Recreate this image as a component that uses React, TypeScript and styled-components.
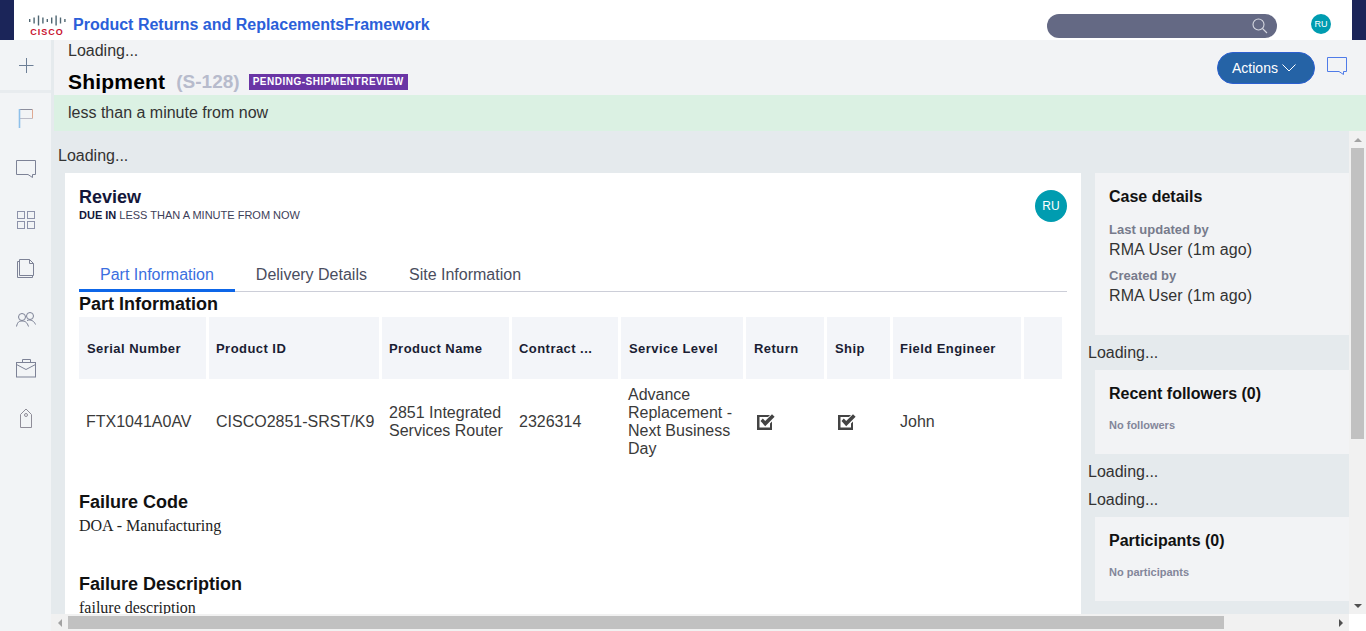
import React from 'react';
import styled, { createGlobalStyle } from 'styled-components';

const GlobalStyle = createGlobalStyle`
  html, body {
    margin: 0;
    padding: 0;
    height: 631px;
    overflow: hidden;
    background: #fff;
    font-family: "Liberation Sans", Arial, sans-serif;
    font-size: 16px;
    color: #222;
  }
  * { box-sizing: border-box; }
`;

const Page = styled.div`
  width: 1366px;
  height: 631px;
  display: flex;
  flex-direction: column;
  overflow: hidden;
`;

/* top bar */
const TopBar = styled.header`
  height: 40px;
  flex: none;
  display: flex;
  align-items: center;
  background: #fff;
  border-left: 14px solid #1b2559;
  border-right: 14px solid #1b2559;
  padding: 0 21px 0 14px;
`;

const Logo = styled.div`
  width: 38px;
  height: 24px;
  margin-top: 14px;
  display: flex;
  flex-direction: column;
  align-items: center;
`;

const LogoWord = styled.span`
  font-size: 9px;
  line-height: 9px;
  font-weight: 700;
  letter-spacing: 1px;
  color: #c8102e;
  margin-top: 2px;
`;

const AppTitle = styled.h1`
  margin: 10px 0 0 7px;
  font-size: 16px;
  line-height: 18px;
  font-weight: 700;
  color: #2b5fd9;
  flex: 1;
`;

const SearchBox = styled.div`
  width: 230px;
  height: 24px;
  margin-top: 12px;
  border-radius: 12px;
  background: #646984;
  display: flex;
  align-items: center;
  justify-content: flex-end;
  padding-right: 9px;
`;

const Avatar = styled.div<{ $size: number; $font: number }>`
  width: ${p => p.$size}px;
  height: ${p => p.$size}px;
  flex: none;
  border-radius: 50%;
  background: #009cb0;
  color: #fff;
  font-size: ${p => p.$font}px;
  display: flex;
  align-items: center;
  justify-content: center;
`;

const TopAvatar = styled(Avatar)`
  margin: 8px 0 0 34px;
`;

/* body */
const Body = styled.div`
  flex: 1;
  display: flex;
  min-height: 0;
`;

const SideNav = styled.nav`
  width: 51px;
  flex: none;
  background: #f2f4f6;
  display: flex;
  flex-direction: column;
`;

const NavCell = styled.div<{ $first?: boolean; $nudge?: number }>`
  height: 50px;
  flex: none;
  display: flex;
  align-items: center;
  justify-content: center;
  padding-top: ${p => p.$nudge ?? 0}px;
  ${p => p.$first && 'height: 53px; border-bottom: 3px solid #e8ecef;'}
`;

const MainColumn = styled.div`
  flex: 1;
  min-width: 0;
  display: flex;
  flex-direction: column;
  background: #e5eaed;
`;

const CasePanel = styled.div`
  height: 55px;
  flex: none;
  margin-left: 3px;
  background: #f2f3f5;
  padding: 2px 19px 0 14px;
  display: flex;
  justify-content: space-between;
`;

const LoadingText = styled.div`
  font-size: 16px;
  line-height: 18px;
  color: #333;
`;

const CaseTitleRow = styled.div`
  display: flex;
  align-items: center;
  margin-top: 10px;
  height: 24px;
`;

const CaseName = styled.span`
  font-size: 21px;
  font-weight: 700;
  letter-spacing: 0.2px;
  color: #000;
`;

const CaseId = styled.span`
  font-size: 19px;
  font-weight: 700;
  color: #b7bbcc;
  margin-left: 11px;
`;

const StatusBadge = styled.span`
  margin-left: 9px;
  height: 16px;
  padding: 0 4px;
  background: #6a35a5;
  color: #fff;
  font-size: 10px;
  line-height: 16px;
  font-weight: 700;
  letter-spacing: 0.5px;
`;

const CaseActions = styled.div`
  display: flex;
  align-items: flex-start;
  gap: 12px;
  padding-top: 10px;
`;

const ActionsButton = styled.button`
  width: 98px;
  height: 32px;
  border: 1px solid #2b5fd0;
  border-radius: 16px;
  background: #2563a6;
  color: #fff;
  font: 14px "Liberation Sans", Arial, sans-serif;
  display: flex;
  align-items: center;
  justify-content: center;
  gap: 4px;
  padding: 0 4px 0 0;
`;

const ChatButton = styled.div`
  padding-top: 3px;
  line-height: 0;
`;

const DueBanner = styled.div`
  height: 36px;
  flex: none;
  margin-left: 3px;
  background: #dbf1e3;
  padding-left: 14px;
  font-size: 16px;
  line-height: 36px;
  color: #333;
`;

/* scroll frame */
const ScrollFrame = styled.div`
  flex: 1;
  min-height: 0;
  display: grid;
  grid-template-columns: 1298px 17px;
  grid-template-rows: 483px 17px;
`;

const Viewport = styled.div`
  overflow: hidden;
  padding-left: 7px;
`;

const ViewportLoading = styled(LoadingText)`
  padding-top: 16px;
  height: 42px;
`;

const Columns = styled.div`
  display: flex;
  width: 1400px;
`;

const Card = styled.section`
  width: 1016px;
  flex: none;
  margin-left: 7px;
  background: #fff;
  padding: 14px 14px 30px;
`;

const CardHead = styled.div`
  display: flex;
  justify-content: space-between;
  align-items: flex-start;
  height: 75px;
`;

const CardTitle = styled.h2`
  margin: 0;
  font-size: 18px;
  line-height: 20px;
  font-weight: 700;
  color: #14173a;
`;

const DueLine = styled.div`
  display: flex;
  font-size: 11px;
  line-height: 13px;
  color: #3d4058;
  margin-top: 2px;
`;

const DueLabel = styled.strong`
  color: #14173a;
  margin-right: 3px;
`;

const CardAvatar = styled(Avatar)`
  margin-top: 3px;
`;

const TabList = styled.div`
  display: flex;
  height: 30px;
  border-bottom: 1px solid #ccced8;
`;

const Tab = styled.div<{ $active?: boolean }>`
  height: 30px;
  padding: 0 21px;
  font-size: 16px;
  line-height: 26px;
  color: ${p => (p.$active ? '#3b6fe0' : '#4a4d5e')};
  ${p => p.$active && 'border-bottom: 3px solid #0d66e8;'}
`;

const SectionTitle = styled.h3`
  margin: 0;
  font-size: 18px;
  line-height: 25px;
  font-weight: 700;
  color: #111;
`;

const SectionText = styled.p`
  margin: 2px 0 0;
  font-family: "Liberation Serif", "Times New Roman", serif;
  font-size: 16px;
  line-height: 18px;
  color: #222;
`;

const FailureBlock = styled.div<{ $gap: number }>`
  margin-top: ${p => p.$gap}px;
`;

const PartsTable = styled.div`
  display: grid;
  grid-template-columns: 127px 170px 127px 106px 122px 78px 63px 128px 38px;
  column-gap: 3px;
  width: 983px;
`;

const HeadCell = styled.div<{ $inset: number }>`
  height: 62px;
  background: #f3f5f9;
  padding-left: ${p => p.$inset}px;
  font-size: 13px;
  font-weight: 700;
  letter-spacing: 0.45px;
  color: #1a1d33;
  display: flex;
  align-items: center;
  white-space: nowrap;
`;

const BodyCell = styled.div<{ $inset?: number }>`
  height: 86px;
  padding-left: ${p => p.$inset ?? 7}px;
  font-size: 16px;
  line-height: 18px;
  color: #3a3a3a;
  display: flex;
  align-items: center;
`;

const SideColumn = styled.aside`
  width: 270px;
  flex: none;
  margin-left: 7px;
`;

const SidePanel = styled.div<{ $height: number }>`
  height: ${p => p.$height}px;
  margin-left: 7px;
  background: #f2f3f5;
  padding: 15px 14px;
`;

const SideTitle = styled.h4`
  margin: 0;
  font-size: 16px;
  line-height: 18px;
  font-weight: 700;
  color: #111;
`;

const SideDetails = styled.div`
  margin-top: 17px;
`;

const SideLabel = styled.div`
  margin-top: 9px;
  font-size: 13px;
  line-height: 14px;
  font-weight: 700;
  color: #777b8c;

  &:first-child {
    margin-top: 0;
  }
`;

const SideValue = styled.div`
  margin-top: 3px;
  font-size: 16px;
  line-height: 20px;
  letter-spacing: 0.1px;
  color: #333;
`;

const SideEmpty = styled.div`
  margin-top: 16px;
  font-size: 11px;
  line-height: 12px;
  font-weight: 700;
  color: #83869a;
`;

const SideLoading = styled(LoadingText)<{ $height: number; $top: number }>`
  height: ${p => p.$height}px;
  padding-top: ${p => p.$top}px;
`;

const VerticalBar = styled.div`
  background: #f1f1f1;
  display: flex;
  flex-direction: column;
  align-items: center;
  justify-content: space-between;
`;

const VerticalThumb = styled.div`
  width: 13px;
  height: 291px;
  margin-left: 2px;
  background: #c1c1c1;
`;

const HorizontalBar = styled.div`
  background: #f1f1f1;
  display: flex;
  align-items: center;
`;

const HorizontalThumb = styled.div`
  width: 1156px;
  height: 13px;
  background: #c1c1c1;
  margin-right: auto;
`;

const ArrowSlot = styled.div`
  height: 17px;
  width: 17px;
  display: flex;
  align-items: center;
  justify-content: center;
  line-height: 0;
`;

const Corner = styled.div`
  background: #fff;
`;

const navStroke = '#7d8296';

function Icon({ w, h, children, stroke = navStroke }: { w: number; h: number; children: React.ReactNode; stroke?: string }) {
  return (
    <svg width={w} height={h} viewBox={`0 0 ${w} ${h}`} fill="none" stroke={stroke} strokeWidth="1">
      {children}
    </svg>
  );
}

function ChatIcon({ stroke }: { stroke?: string }) {
  return (
    <Icon w={20} h={20} stroke={stroke}>
      <path d="M.5 2.5H19.5V16.5H16.5V19.5L12 16.5H.5Z" />
    </Icon>
  );
}

function Triangle({ dir, muted }: { dir: 'up' | 'down' | 'left' | 'right'; muted?: boolean }) {
  const points = { up: '0,6 4,2 8,6', down: '0,2 8,2 4,6', left: '6,0 6,8 2,4', right: '2,0 2,8 6,4' }[dir];
  return (
    <svg width="8" height="8" viewBox="0 0 8 8">
      <polygon points={points} fill={muted ? '#a3a3a3' : '#505050'} />
    </svg>
  );
}

function CiscoLogo() {
  const bars = [3, 6, 10, 6, 3, 6, 10, 6, 3];
  return (
    <Logo>
      <svg width="38" height="11" viewBox="0 0 38 11">
        {bars.map((b, i) => (
          <rect key={i} x={1 + i * 4.4} y={(11 - b) / 2} width="1.4" height={b} fill="#4f6672" />
        ))}
      </svg>
      <LogoWord>CISCO</LogoWord>
    </Logo>
  );
}

const columns: [string, number][] = [
  ['Serial Number', 8],
  ['Product ID', 7],
  ['Product Name', 7],
  ['Contract ...', 7],
  ['Service Level', 8],
  ['Return', 8],
  ['Ship', 8],
  ['Field Engineer', 7],
  ['', 7],
];

function CheckedBox() {
  return (
    <svg width="18" height="16" viewBox="0 0 18 16">
      <path d="M0 1H13L11 3H2.5V13.5H13V9.5L15 7.5V16H0Z" fill="#444" />
      <path d="M3.5 7L5.8 4.6L8.2 7L15 .2L17.6 2.8L8.2 12.2Z" fill="#444" />
    </svg>
  );
}

export default function App() {
  return (
    <Page>
      <GlobalStyle />
      <TopBar>
        <CiscoLogo />
        <AppTitle>Product Returns and ReplacementsFramework</AppTitle>
        <SearchBox>
          <svg width="16" height="16" viewBox="0 0 16 16" fill="none" stroke="#d5d7e0" strokeWidth="1.1">
            <circle cx="6.5" cy="6.5" r="5.5" />
            <path d="M10.5 10.5L15 15" />
          </svg>
        </SearchBox>
        <TopAvatar $size={20} $font={9}>RU</TopAvatar>
      </TopBar>

      <Body>
        <SideNav>
          <NavCell $first>
            <Icon w={16} h={16} stroke="#6d7f96">
              <path d="M8.5 1V16M1 8.5H15.5" />
            </Icon>
          </NavCell>
          <NavCell>
            <Icon w={16} h={20} stroke="#8d8f9e">
              <path d="M1.5 1.5H14.5" />
              <path d="M14.5 1.5V10.5" stroke="#dfa992" />
              <path d="M1.5 10.5H14.5" stroke="#bcbdc8" />
              <path d="M1.5 1V20" stroke="#8ec0ea" strokeWidth="1.6" />
            </Icon>
          </NavCell>
          <NavCell>
            <ChatIcon />
          </NavCell>
          <NavCell $nudge={4}>
            <Icon w={18} h={18} stroke="#8d92aa">
              <rect x=".5" y=".5" width="7" height="7" />
              <rect x="10.5" y=".5" width="7" height="7" />
              <rect x=".5" y="10.5" width="7" height="7" />
              <rect x="10.5" y="10.5" width="7" height="7" />
            </Icon>
          </NavCell>
          <NavCell>
            <Icon w={18} h={20}>
              <path d="M2.5 1.5H12.5L16.5 5.5V17.5H2.5Z" />
              <path d="M12.5 1.5V5.5H16.5" />
              <path d="M2.5 3.5H.5V19.5H15.5V17.5" />
            </Icon>
          </NavCell>
          <NavCell $nudge={2}>
            <Icon w={20} h={15}>
              <circle cx="6" cy="5" r="3.5" />
              <circle cx="14" cy="4" r="3.5" />
              <path d="M.5 14.5C1.5 10 3 9 6 9S11 10 12.5 14.5" />
              <path d="M11 8.5C15 7 18 9 19.5 12.5" />
            </Icon>
          </NavCell>
          <NavCell>
            <Icon w={20} h={19}>
              <rect x=".5" y="3.5" width="19" height="14.5" />
              <path d="M6.5 3.5V.5H14.5V3.5" />
              <path d="M.5 5.5L10 10.5L19.5 5.5" />
            </Icon>
          </NavCell>
          <NavCell>
            <Icon w={12} h={20} stroke="#8f8d98">
              <path d="M.5 6.5L6 1L11.5 6.5V19.5H.5Z" />
              <circle cx="6" cy="7" r="1.5" />
            </Icon>
          </NavCell>
        </SideNav>

        <MainColumn>
          <CasePanel>
            <div>
              <LoadingText>Loading...</LoadingText>
              <CaseTitleRow>
                <CaseName>Shipment</CaseName>
                <CaseId>(S-128)</CaseId>
                <StatusBadge>PENDING-SHIPMENTREVIEW</StatusBadge>
              </CaseTitleRow>
            </div>
            <CaseActions>
              <ActionsButton>
                Actions
                <svg width="14" height="8" viewBox="0 0 14 8" fill="none" stroke="#fff" strokeWidth="1">
                  <path d="M.5 .5L7 7L13.5 .5" />
                </svg>
              </ActionsButton>
              <ChatButton>
                <ChatIcon stroke="#4f7be8" />
              </ChatButton>
            </CaseActions>
          </CasePanel>

          <DueBanner>less than a minute from now</DueBanner>

          <ScrollFrame>
            <Viewport>
              <ViewportLoading>Loading...</ViewportLoading>
              <Columns>
                <Card>
                  <CardHead>
                    <div>
                      <CardTitle>Review</CardTitle>
                      <DueLine>
                        <DueLabel>DUE IN</DueLabel>
                        LESS THAN A MINUTE FROM NOW
                      </DueLine>
                    </div>
                    <CardAvatar $size={32} $font={12}>RU</CardAvatar>
                  </CardHead>

                  <TabList>
                    <Tab $active>Part Information</Tab>
                    <Tab>Delivery Details</Tab>
                    <Tab>Site Information</Tab>
                  </TabList>

                  <SectionTitle>Part Information</SectionTitle>
                  <PartsTable>
                    {columns.map(([label, inset]) => (
                      <HeadCell key={label || 'blank'} $inset={inset}>{label}</HeadCell>
                    ))}
                    <BodyCell>FTX1041A0AV</BodyCell>
                    <BodyCell>CISCO2851-SRST/K9</BodyCell>
                    <BodyCell>2851 Integrated Services Router</BodyCell>
                    <BodyCell>2326314</BodyCell>
                    <BodyCell>Advance Replacement - Next Business Day</BodyCell>
                    <BodyCell $inset={11}><CheckedBox /></BodyCell>
                    <BodyCell $inset={11}><CheckedBox /></BodyCell>
                    <BodyCell>John</BodyCell>
                    <BodyCell />
                  </PartsTable>

                  <FailureBlock $gap={25}>
                    <SectionTitle>Failure Code</SectionTitle>
                    <SectionText>DOA - Manufacturing</SectionText>
                  </FailureBlock>
                  <FailureBlock $gap={37}>
                    <SectionTitle>Failure Description</SectionTitle>
                    <SectionText>failure description</SectionText>
                  </FailureBlock>
                </Card>

                <SideColumn>
                  <SidePanel $height={162}>
                    <SideTitle>Case details</SideTitle>
                    <SideDetails>
                      <SideLabel>Last updated by</SideLabel>
                      <SideValue>RMA User (1m ago)</SideValue>
                      <SideLabel>Created by</SideLabel>
                      <SideValue>RMA User (1m ago)</SideValue>
                    </SideDetails>
                  </SidePanel>
                  <SideLoading $height={35} $top={9}>Loading...</SideLoading>
                  <SidePanel $height={84}>
                    <SideTitle>Recent followers (0)</SideTitle>
                    <SideEmpty>No followers</SideEmpty>
                  </SidePanel>
                  <SideLoading $height={35} $top={9}>Loading...</SideLoading>
                  <SideLoading $height={28} $top={2}>Loading...</SideLoading>
                  <SidePanel $height={84}>
                    <SideTitle>Participants (0)</SideTitle>
                    <SideEmpty>No participants</SideEmpty>
                  </SidePanel>
                </SideColumn>
              </Columns>
            </Viewport>

            <VerticalBar>
              <div>
                <ArrowSlot><Triangle dir="up" muted /></ArrowSlot>
                <VerticalThumb />
              </div>
              <ArrowSlot><Triangle dir="down" /></ArrowSlot>
            </VerticalBar>

            <HorizontalBar>
              <ArrowSlot><Triangle dir="left" muted /></ArrowSlot>
              <HorizontalThumb />
              <ArrowSlot><Triangle dir="right" /></ArrowSlot>
            </HorizontalBar>
            <Corner />
          </ScrollFrame>
        </MainColumn>
      </Body>
    </Page>
  );
}
